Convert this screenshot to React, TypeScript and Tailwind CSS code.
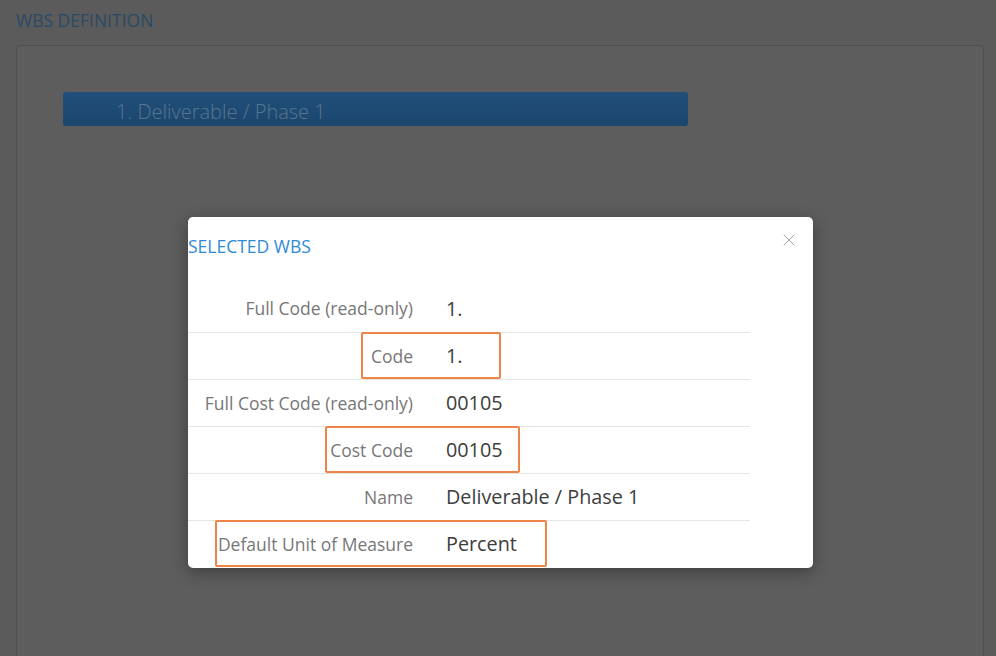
import { X } from 'lucide-react'

interface Row {
  label: string
  value: string
  // orange callout box around the row (left offset / width in px)
  mark?: { left: string; width: string }
}

const rows: Row[] = [
  { label: 'Full Code (read-only)', value: '1.' },
  { label: 'Code', value: '1.', mark: { left: 'left-[173px]', width: 'w-[140px]' } },
  { label: 'Full Cost Code (read-only)', value: '00105' },
  { label: 'Cost Code', value: '00105', mark: { left: 'left-[137px]', width: 'w-[195px]' } },
  { label: 'Name', value: 'Deliverable / Phase 1' },
  { label: 'Default Unit of Measure', value: 'Percent', mark: { left: 'left-[27px]', width: 'w-[332px]' } },
]

export default function App() {
  return (
    <div
      className="relative h-[656px] w-[996px] overflow-hidden bg-[#5b5b5b]"
      style={{ fontFamily: '"Open Sans", "Liberation Sans", sans-serif' }}
    >
      {/* Pagina por tras do modal (ja escurecida) */}
      <div className="pl-4 pr-3 pt-2">
        <h2 className="text-[17.5px] leading-6 text-[#2c4a66]">WBS DEFINITION</h2>
        <div className="mt-[13px] h-[640px] rounded border border-[#4f4f4f] bg-[#5d5d5d] px-[46px] pt-[46px]">
          <div className="flex h-[34px] w-[625px] items-center rounded-[3px] bg-gradient-to-b from-[#214f79] to-[#1b466e] pl-[53px] pt-[5px] text-xl font-light text-[#5a7590]">
            1. Deliverable / Phase 1
          </div>
        </div>
      </div>

      {/* Modal */}
      <div className="absolute left-[188px] top-[217px] h-[351px] w-[625px] rounded-[5px] bg-white shadow-[0_4px_16px_rgba(0,0,0,0.35)]">
        <div className="flex items-start justify-between pt-[17px]">
          <h3 className="text-[17.5px] leading-6 text-[#2f8ad6]">SELECTED WBS</h3>
          <button className="mr-[14px] mt-[-4px] text-[#9a9a9a]">
            <X className="h-[20px] w-[20px]" strokeWidth={1.1} />
          </button>
        </div>

        <div className="mt-[27px] w-[562px]">
          {rows.map((row, i) => (
            <div
              key={row.label}
              className={
                'relative flex h-[47px] items-center ' +
                (i > 0 ? 'border-t border-[#e5e5e5]' : '')
              }
            >
              <div className="w-[245px] pr-[20px] text-right text-[17.5px] text-[#777]">{row.label}</div>
              <div className="pl-[13px] text-[19.8px] text-[#3d3d3d]">{row.value}</div>
              {row.mark && (
                <div
                  className={
                    'absolute top-[-1px] h-[47px] rounded-[2px] border-2 border-[#ee8447] ' +
                    row.mark.left +
                    ' ' +
                    row.mark.width
                  }
                />
              )}
            </div>
          ))}
        </div>
      </div>
    </div>
  )
}
